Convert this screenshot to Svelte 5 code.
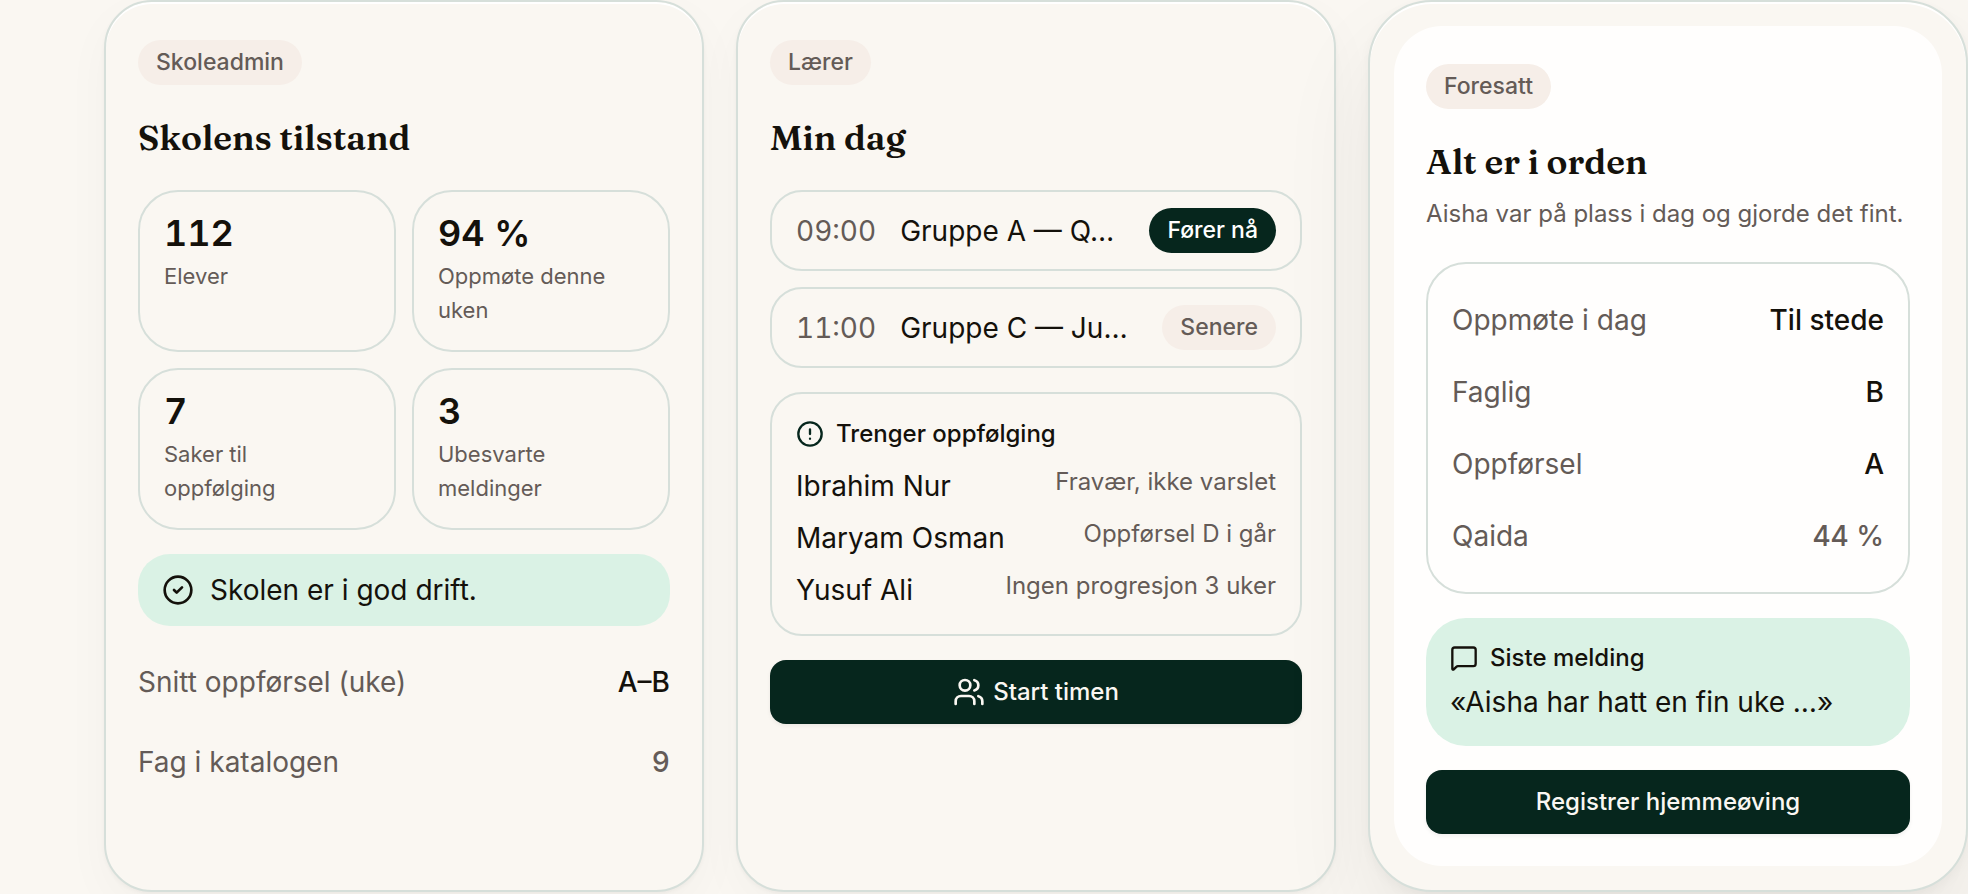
<script>
  const stats = [
    { value: '112', label: 'Elever' },
    { value: '94 %', label: 'Oppmøte denne uken' },
    { value: '7', label: 'Saker til oppfølging' },
    { value: '3', label: 'Ubesvarte meldinger' }
  ];

  const schoolRows = [
    { label: 'Snitt oppførsel (uke)', value: 'A–B' },
    { label: 'Fag i katalogen', value: '9', muted: true }
  ];

  const lessons = [
    { time: '09:00', group: 'Gruppe A — Q…', status: 'Fører nå', active: true },
    { time: '11:00', group: 'Gruppe C — Ju…', status: 'Senere' }
  ];

  const followUps = [
    { name: 'Ibrahim Nur', note: 'Fravær, ikke varslet' },
    { name: 'Maryam Osman', note: 'Oppførsel D i går' },
    { name: 'Yusuf Ali', note: 'Ingen progresjon 3 uker' }
  ];

  const childRows = [
    { label: 'Oppmøte i dag', value: 'Til stede' },
    { label: 'Faglig', value: 'B' },
    { label: 'Oppførsel', value: 'A' },
    { label: 'Qaida', value: '44 %', muted: true }
  ];
</script>

<main class="roles">
  <section class="card">
    <span class="chip">Skoleadmin</span>
    <h2>Skolens tilstand</h2>
    <div class="body">
      <ul class="stats">
        {#each stats as stat}
          <li class="stat">
            <strong>{stat.value}</strong>
            <span>{stat.label}</span>
          </li>
        {/each}
      </ul>
      <p class="banner">
        <svg class="icon" viewBox="0 0 24 24" aria-hidden="true">
          <circle cx="12" cy="12" r="10" />
          <path d="m9 12 2 2 4-4" />
        </svg>
        Skolen er i god drift.
      </p>
      <dl class="rows rows--spaced">
        {#each schoolRows as row}
          <div class="row">
            <dt>{row.label}</dt>
            <dd class:muted={row.muted}>{row.value}</dd>
          </div>
        {/each}
      </dl>
    </div>
  </section>

  <section class="card">
    <span class="chip">Lærer</span>
    <h2>Min dag</h2>
    <div class="body">
      <ul class="lessons">
        {#each lessons as lesson}
          <li class="lesson">
            <time>{lesson.time}</time>
            <span class="lesson__group">{lesson.group}</span>
            <span class="chip" class:chip--active={lesson.active}>{lesson.status}</span>
          </li>
        {/each}
      </ul>
      <div class="panel">
        <h3>
          <svg class="icon icon--small icon--green" viewBox="0 0 24 24" aria-hidden="true">
            <circle cx="12" cy="12" r="10" />
            <path d="M12 8v4M12 16h.01" />
          </svg>
          Trenger oppfølging
        </h3>
        <ul class="people">
          {#each followUps as person}
            <li>
              <span>{person.name}</span>
              <small>{person.note}</small>
            </li>
          {/each}
        </ul>
      </div>
      <button type="button">
        <svg class="icon" viewBox="0 0 24 24" aria-hidden="true">
          <path d="M16 21v-2a4 4 0 0 0-4-4H6a4 4 0 0 0-4 4v2" />
          <circle cx="9" cy="7" r="4" />
          <path d="M22 21v-2a4 4 0 0 0-3-3.87" />
          <path d="M16 3.13a4 4 0 0 1 0 7.75" />
        </svg>
        Start timen
      </button>
    </div>
  </section>

  <div class="frame">
    <section class="card card--inner">
      <span class="chip">Foresatt</span>
      <h2>Alt er i orden</h2>
      <p class="lead">Aisha var på plass i dag og gjorde det fint.</p>
      <div class="body">
        <dl class="rows rows--boxed">
          {#each childRows as row}
            <div class="row">
              <dt>{row.label}</dt>
              <dd class:muted={row.muted}>{row.value}</dd>
            </div>
          {/each}
        </dl>
        <div class="message">
          <h3>
            <svg class="icon icon--small" viewBox="0 0 24 24" aria-hidden="true">
              <path d="M22 17a2 2 0 0 1-2 2H6.828a2 2 0 0 0-1.414.586l-2.202 2.202A.71.71 0 0 1 2 21.286V5a2 2 0 0 1 2-2h16a2 2 0 0 1 2 2z" />
            </svg>
            Siste melding
          </h3>
          <p>«Aisha har hatt en fin uke …»</p>
        </div>
        <button type="button">Registrer hjemmeøving</button>
      </div>
    </section>
  </div>
</main>

<style>
  :global(body) {
    margin: 0;
    background: #faf7f2;
  }

  .roles {
    --ink: #14110b;
    --muted: #645b57;
    --line: #d6dfda;
    --paper: #faf7f2;
    --mint: #daf2e5;
    --green: #06261d;

    display: grid;
    grid-template-columns: repeat(3, minmax(0, 1fr));
    gap: 32px;
    padding: 0 0 2px 104px;
    overflow: hidden;
    background: var(--paper);
    color: var(--ink);
    font-family: Inter, 'Liberation Sans', sans-serif;
    font-size: 28px;
    line-height: 42px;
  }

  h2, h3, p, ul, dl, dd {
    margin: 0;
    padding: 0;
    list-style: none;
  }

  .card {
    display: flex;
    flex-direction: column;
    align-items: flex-start;
    padding: 38px 32px 32px;
    border: 2px solid var(--line);
    border-radius: 48px;
    background: var(--paper);
    box-shadow: inset 0 2px 0 #fff, 0 2px 4px rgba(20, 17, 11, 0.04), 0 16px 48px rgba(20, 17, 11, 0.03);
  }

  .card--inner {
    border: 0;
    background: #fffefd;
    box-shadow: none;
  }

  .frame {
    padding: 24px;
    border: 2px solid var(--line);
    border-radius: 64px;
    background: var(--paper);
    box-shadow: inset 0 2px 0 #fff, 0 4px 12px rgba(20, 17, 11, 0.04), 0 48px 96px rgba(20, 17, 11, 0.07);
  }

  .chip {
    flex: none;
    padding: 8px 18px;
    border-radius: 23px;
    background: #f6eee8;
    color: var(--muted);
    font-size: 23px;
    font-weight: 500;
    line-height: 29px;
  }

  .chip--active {
    background: var(--green);
    color: #fff;
  }

  h2 {
    margin: 31px 0 0;
    font-family: Fraunces, 'Liberation Serif', serif;
    font-size: 35px;
    font-weight: 600;
    line-height: 44px;
  }

  h3 {
    display: flex;
    align-items: center;
    gap: 12px;
    font-size: 24px;
    font-weight: 500;
    line-height: 32px;
  }

  .lead {
    margin-top: 12px;
    color: var(--muted);
    font-size: 24px;
    line-height: 36px;
  }

  .body {
    display: flex;
    flex-direction: column;
    align-self: stretch;
    gap: 24px;
    margin-top: 30px;
  }

  .stats {
    display: grid;
    grid-template-columns: 1fr 1fr;
    gap: 16px;
  }

  .stat {
    display: flex;
    flex-direction: column;
    gap: 7px;
    padding: 22px 32px 23px 24px;
    border: 2px solid var(--line);
    border-radius: 40px;
  }

  .stat strong {
    font-size: 36px;
    font-weight: 600;
    line-height: 38px;
    font-variant-numeric: tabular-nums;
  }

  .stat span {
    color: var(--muted);
    font-size: 22px;
    line-height: 34px;
  }

  .banner {
    display: flex;
    align-items: center;
    gap: 16px;
    padding: 15px 24px;
    border-radius: 32px;
    background: var(--mint);
  }

  .icon {
    flex: none;
    width: 32px;
    height: 32px;
    fill: none;
    stroke: currentColor;
    stroke-width: 2;
    stroke-linecap: round;
    stroke-linejoin: round;
  }

  .icon--small {
    width: 28px;
    height: 28px;
  }

  .icon--green {
    color: var(--green);
  }

  .row {
    display: flex;
    align-items: center;
    justify-content: space-between;
    padding: 15px 0;
  }

  .rows--spaced .row {
    padding: 11px 0;
  }

  .rows--spaced {
    display: grid;
    gap: 16px;
  }

  .rows--boxed {
    padding: 20px 24px;
    border: 2px solid var(--line);
    border-radius: 40px;
  }

  dt, dd.muted {
    color: var(--muted);
  }

  dd {
    font-weight: 500;
    font-variant-numeric: tabular-nums;
  }

  .lessons {
    display: grid;
    gap: 16px;
  }

  .lesson {
    display: flex;
    align-items: center;
    gap: 24px;
    padding: 16px 24px;
    border: 2px solid var(--line);
    border-radius: 32px;
  }

  .lesson time {
    color: var(--muted);
    font-variant-numeric: tabular-nums;
  }

  .lesson__group {
    flex: 1;
    min-width: 0;
    overflow: hidden;
    text-overflow: ellipsis;
    white-space: nowrap;
  }

  .panel {
    padding: 24px 24px 22px;
    border: 2px solid var(--line);
    border-radius: 32px;
  }

  .people {
    display: grid;
    gap: 8px;
    margin-top: 14px;
  }

  .people li {
    display: flex;
    align-items: flex-start;
    justify-content: space-between;
    line-height: 44px;
  }

  .people small {
    color: var(--muted);
    font-size: 24px;
    line-height: 36px;
  }

  .message {
    display: grid;
    gap: 7px;
    padding: 24px 24px 23px;
    border-radius: 40px;
    background: var(--mint);
  }

  button {
    display: flex;
    align-items: center;
    justify-content: center;
    gap: 8px;
    padding: 16px 24px;
    border: 0;
    border-radius: 16px;
    background: var(--green);
    box-shadow: 0 2px 4px rgba(20, 17, 11, 0.06);
    color: #faf7f2;
    font: inherit;
    font-size: 24px;
    font-weight: 500;
    line-height: 32px;
    cursor: pointer;
  }
</style>
